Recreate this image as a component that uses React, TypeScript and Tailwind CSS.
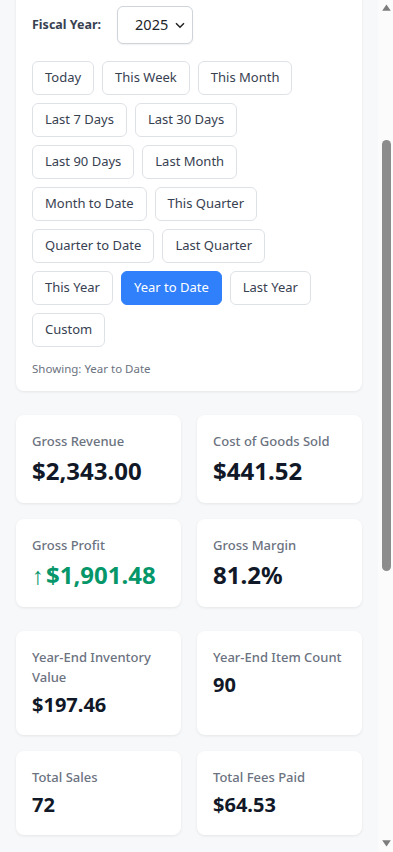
import React from "react";

const rows: string[][] = [
  ["Today", "This Week", "This Month"],
  ["Last 7 Days", "Last 30 Days"],
  ["Last 90 Days", "Last Month"],
  ["Month to Date", "This Quarter"],
  ["Quarter to Date", "Last Quarter"],
  ["This Year", "Year to Date", "Last Year"],
  ["Custom"],
];

function Stat({
  label,
  value,
  big,
  green,
}: {
  label: string;
  value: string;
  big?: boolean;
  green?: boolean;
}) {
  return (
    <div className="rounded-lg bg-white p-4 shadow-[0_1px_3px_rgba(0,0,0,0.08)]">
      <div className="text-[13px] leading-5 font-medium text-[#6b7280]">{label}</div>
      <div
        className={
          big
            ? "mt-1 text-[24px] leading-8 font-bold " + (green ? "text-[#059669]" : "text-[#111827]")
            : "mt-1 text-[20px] leading-7 font-bold text-[#111827]"
        }
      >
        {green ? (
          <span className="inline-flex items-baseline">
            <span className="mr-[2px] font-normal">↑</span>
            {value}
          </span>
        ) : (
          value
        )}
      </div>
    </div>
  );
}

function Scrollbar() {
  return (
    <div className="flex h-full w-[15px] shrink-0 flex-col items-center bg-[#fbfbfb] pt-[4px] pb-[5px]">
      <svg width="9" height="7" viewBox="0 0 9 7" className="ml-[2px]">
        <path d="M4.5 0.5L8.8 6.8H0.2Z" fill="#7d7d7d" />
      </svg>
      <div className="mt-[129px] ml-[1px] h-[431px] w-[9px] rounded-full bg-[#8c8c8c]" />
      <div className="flex-1" />
      <svg width="9" height="7" viewBox="0 0 9 7" className="ml-[2px]">
        <path d="M0.2 0.2H8.8L4.5 6.5Z" fill="#7d7d7d" />
      </svg>
    </div>
  );
}

export default function App() {
  return (
    <div className="flex h-[852px] w-[393px] overflow-hidden bg-[#f7f8fa] [font-family:'Noto_Sans',sans-serif]">
      <main className="flex-1 px-4">
        <section className="-mt-[10px] rounded-lg bg-white px-4 pt-4 pb-3 shadow-[0_1px_3px_rgba(0,0,0,0.08)]">
          <div className="mb-[17px] flex items-center gap-4">
            <label className="text-[12.5px] font-bold text-[#374151]">Fiscal Year:</label>
            <div className="relative">
              <select
                defaultValue="2025"
                className="h-[38px] w-[76px] appearance-none rounded-md border border-[#ced4da] bg-white pl-[17px] pr-6 text-[14.5px] text-[#212529] shadow-[0_1px_2px_rgba(0,0,0,0.06)]"
              >
                <option>2024</option>
                <option>2025</option>
              </select>
              <svg
                className="pointer-events-none absolute right-[8px] top-[16px]"
                width="10"
                height="7"
                viewBox="0 0 10 7"
                fill="none"
              >
                <path d="M1 1.2l4 4 4-4" stroke="#222" strokeWidth="1.5" />
              </svg>
            </div>
          </div>
          <div className="flex flex-col gap-2">
            {rows.map((r, i) => (
              <div key={i} className="flex gap-2">
                {r.map((b) => (
                  <button
                    key={b}
                    className={
                      b === "Year to Date"
                        ? "h-[34px] rounded-md border border-[#2f80fa] bg-[#2f80fa] px-3 text-[13px] text-white"
                        : "h-[34px] rounded-md border border-[#dee2e6] bg-white px-3 text-[13px] text-[#374151]"
                    }
                  >
                    {b}
                  </button>
                ))}
              </div>
            ))}
          </div>
          <p className="mt-3 text-[11.5px] leading-5 text-[#6b7280]">Showing: Year to Date</p>
        </section>

        <div className="mt-6 grid grid-cols-2 gap-4">
          <Stat label="Gross Revenue" value="$2,343.00" big />
          <Stat label="Cost of Goods Sold" value="$441.52" big />
          <Stat label="Gross Profit" value="$1,901.48" big green />
          <Stat label="Gross Margin" value="81.2%" big />
        </div>

        <div className="mt-6 grid grid-cols-2 gap-4">
          <Stat label="Year-End Inventory Value" value="$197.46" />
          <Stat label="Year-End Item Count" value="90" />
          <Stat label="Total Sales" value="72" />
          <Stat label="Total Fees Paid" value="$64.53" />
        </div>
      </main>
      <Scrollbar />
    </div>
  );
}
